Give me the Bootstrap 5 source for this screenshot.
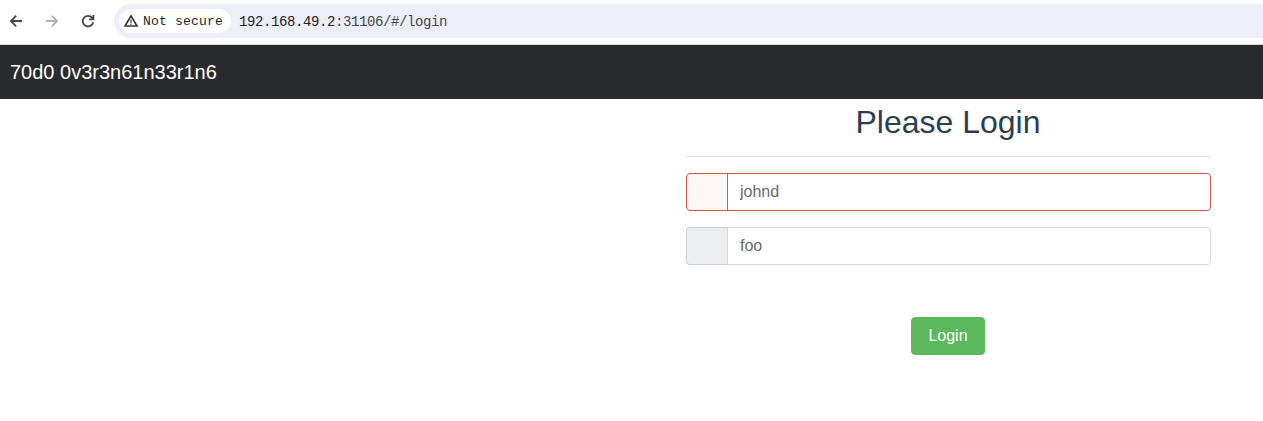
<!DOCTYPE html>
<html lang="en">
<head>
<meta charset="utf-8">
<meta name="viewport" content="width=device-width, initial-scale=1">
<title>Login</title>
<link href="https://cdn.jsdelivr.net/npm/bootstrap@5.3.0/dist/css/bootstrap.min.css" rel="stylesheet">
<style>
body { font-family: "Liberation Sans", Arial, sans-serif; color: #2c3e50; background: #fff; height: 421px; overflow: hidden; }
.toolbar { height: 45px; border-bottom: 1px solid #dcdcde; padding: 4px 0 0 8px; }
.toolbar svg { display: block; }
.nav-icons { height: 34px; gap: 20px; width: 106px; }
.address { height: 34px; background: #eceef8; border-radius: 17px 0 0 17px; padding-left: 5px; font-family: "Liberation Mono", monospace; color: #1f1f1f; }
.chip { height: 24px; width: 112px; border-radius: 12px; background: #fff; padding-left: 4px; font-size: 13px; letter-spacing: .2px; }
.chip svg { margin-right: 4px; }
.chip span { padding-top: 2px; }
.url { margin-left: 8px; padding-top: 2px; font-size: 14px; letter-spacing: -.4px; }
.url span { color: #474747; }
.topbar { height: 54px; background: #292b2c; padding: 0 10px; }
.topbar .navbar-brand { font-size: 20px; color: #fff; padding: 0; }
.login-col { width: 525px; margin-left: 686px; }
.login-col h2 { font-size: 32px; line-height: 35px; margin: 6px 0 0; padding-right: 1px; font-weight: 400; }
.login-col hr { margin: 16px 0; border-top: 1px solid #000; opacity: .1; }
.login-col .input-group { height: 38px; margin-bottom: 16px; --edge: #d9d9d9; }
.login-col .input-group-text { width: 42px; background: #eceeef; border-color: #cdcfd0; border-right-color: var(--edge); border-radius: 4px; }
.login-col .form-control { border-color: var(--edge); border-radius: 4px; padding: 6px 12px; }
.login-col .form-control::placeholder { color: #636c72; opacity: 1; }
.login-col .has-danger { --edge: #d9534f; }
.login-col .has-danger .input-group-text { background: #fdf7f7; border-color: #d9534f; }
.actions { padding-right: 1px; }
.btn-login { --bs-btn-bg: #5cb85c; --bs-btn-border-color: #5cb85c; --bs-btn-color: #fff; --bs-btn-hover-bg: #449d44; --bs-btn-hover-color: #fff; width: 74px; height: 38px; border-radius: 4px; margin-top: 36px; }
</style>
</head>
<body>
<div class="toolbar d-flex">
  <div class="nav-icons d-flex align-items-center flex-shrink-0">
    <svg width="16" height="16" viewBox="0 0 16 16" fill="none" stroke="#474747" stroke-width="1.8"><path d="M14 8H3M8.2 2.7 2.9 8l5.3 5.3"/></svg>
    <svg width="16" height="16" viewBox="0 0 16 16" fill="none" stroke="#b0b0b0" stroke-width="1.8"><path d="M2 8h11M7.8 2.7 13.1 8l-5.3 5.3"/></svg>
    <svg width="16" height="16" viewBox="0 0 16 16" fill="none" stroke="#474747" stroke-width="1.8"><path d="M13.2 9.2A5.3 5.3 0 1 1 12 4.6L13.3 6M13.4 2v4.3H9.2"/></svg>
  </div>
  <div class="address d-flex align-items-center flex-grow-1">
    <div class="chip d-flex align-items-center text-nowrap">
      <svg width="16" height="16" viewBox="0 0 16 16" fill="none" stroke="#303030" stroke-width="1.6"><path d="M8 2.8 14 13H2z"/><path d="M8 6.4v3.4M8 10.5v1.3" stroke-width="1.2"/></svg>
      <span>Not secure</span>
    </div>
    <div class="url">192.168.49.2<span>:31106/#/login</span></div>
  </div>
</div>
<nav class="navbar topbar"><a class="navbar-brand" href="#">70d0 0v3r3n61n33r1n6</a></nav>
<main class="login-col">
  <form>
    <h2 class="text-center">Please Login</h2>
    <hr>
    <div class="input-group has-danger">
      <span class="input-group-text"></span>
      <input type="text" class="form-control" placeholder="johnd" aria-label="Username">
    </div>
    <div class="input-group">
      <span class="input-group-text"></span>
      <input type="password" class="form-control" placeholder="foo" aria-label="Password">
    </div>
    <div class="actions text-center"><button type="button" class="btn btn-login">Login</button></div>
  </form>
</main>
<script src="https://cdn.jsdelivr.net/npm/bootstrap@5.3.0/dist/js/bootstrap.bundle.min.js"></script>
</body>
</html>
